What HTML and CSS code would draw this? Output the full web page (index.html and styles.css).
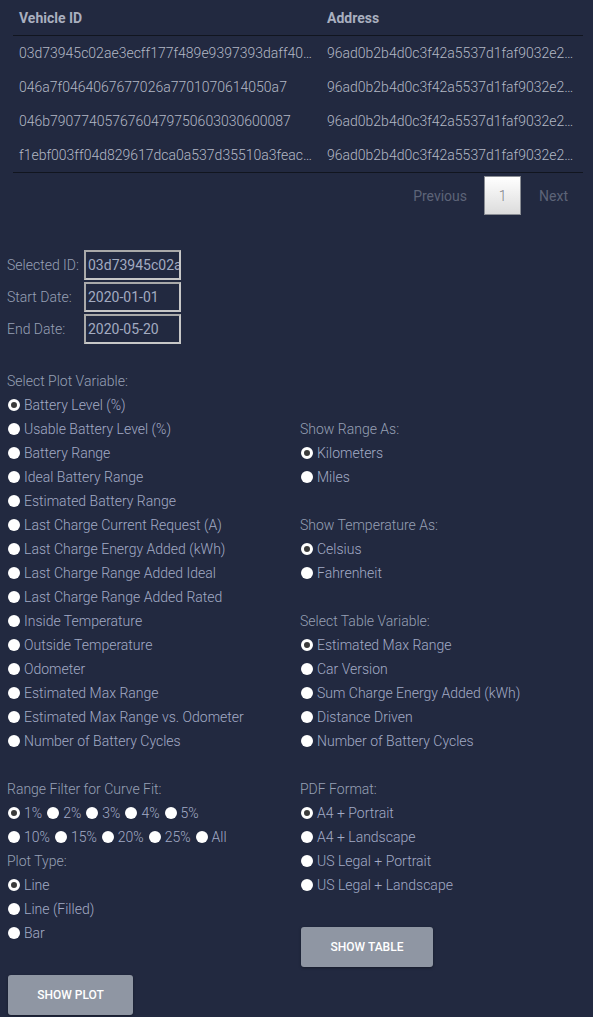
FILE: index.html
```html
<!DOCTYPE html>
<html>
<head>
<meta charset="utf-8">
<link rel="stylesheet" href="styles.css">
</head>
<body>
<div class="table-wrap">
  <table class="vtable">
    <colgroup><col class="c1"><col class="c2"></colgroup>
    <thead>
      <tr><th>Vehicle ID</th><th>Address</th></tr>
    </thead>
    <tbody>
      <tr><td>03d73945c02ae3ecff177f489e9397393daff40a1b2c3d4e5f</td><td>96ad0b2b4d0c3f42a5537d1faf9032e2a1b2c3d4</td></tr>
      <tr><td>046a7f0464067677026a7701070614050a7</td><td>96ad0b2b4d0c3f42a5537d1faf9032e2a1b2c3d4</td></tr>
      <tr><td>046b7907740576760479750603030600087</td><td>96ad0b2b4d0c3f42a5537d1faf9032e2a1b2c3d4</td></tr>
      <tr><td>f1ebf003ff04d829617dca0a537d35510a3feac9a8b7c6d5</td><td>96ad0b2b4d0c3f42a5537d1faf9032e2a1b2c3d4</td></tr>
    </tbody>
  </table>
  <div class="pager">
    <span class="pg-link">Previous</span>
    <span class="pg-num">1</span>
    <span class="pg-link">Next</span>
  </div>
</div>

<div class="fields">
  <div class="field"><span class="flabel">Selected ID:</span><span class="finput">03d73945c02ae3ecff177f489e</span></div>
  <div class="field"><span class="flabel">Start Date:</span><span class="finput">2020-01-01</span></div>
  <div class="field"><span class="flabel">End Date:</span><span class="finput">2020-05-20</span></div>
</div>

<div class="options">
  <div class="col">
    <div class="heading">Select Plot Variable:</div>
    <div class="radio"><span class="dot on"></span>Battery Level (%)</div>
    <div class="radio"><span class="dot"></span>Usable Battery Level (%)</div>
    <div class="radio"><span class="dot"></span>Battery Range</div>
    <div class="radio"><span class="dot"></span>Ideal Battery Range</div>
    <div class="radio"><span class="dot"></span>Estimated Battery Range</div>
    <div class="radio"><span class="dot"></span>Last Charge Current Request (A)</div>
    <div class="radio"><span class="dot"></span>Last Charge Energy Added (kWh)</div>
    <div class="radio"><span class="dot"></span>Last Charge Range Added Ideal</div>
    <div class="radio"><span class="dot"></span>Last Charge Range Added Rated</div>
    <div class="radio"><span class="dot"></span>Inside Temperature</div>
    <div class="radio"><span class="dot"></span>Outside Temperature</div>
    <div class="radio"><span class="dot"></span>Odometer</div>
    <div class="radio"><span class="dot"></span>Estimated Max Range</div>
    <div class="radio"><span class="dot"></span>Estimated Max Range vs. Odometer</div>
    <div class="radio"><span class="dot"></span>Number of Battery Cycles</div>
    <div class="spacer"></div>
    <div class="heading">Range Filter for Curve Fit:</div>
    <div class="inline-row">
      <span class="iradio"><span class="dot on"></span>1%</span>
      <span class="iradio"><span class="dot"></span>2%</span>
      <span class="iradio"><span class="dot"></span>3%</span>
      <span class="iradio"><span class="dot"></span>4%</span>
      <span class="iradio"><span class="dot"></span>5%</span>
    </div>
    <div class="inline-row">
      <span class="iradio"><span class="dot"></span>10%</span>
      <span class="iradio"><span class="dot"></span>15%</span>
      <span class="iradio"><span class="dot"></span>20%</span>
      <span class="iradio"><span class="dot"></span>25%</span>
      <span class="iradio"><span class="dot"></span>All</span>
    </div>
    <div class="heading">Plot Type:</div>
    <div class="radio"><span class="dot on"></span>Line</div>
    <div class="radio"><span class="dot"></span>Line (Filled)</div>
    <div class="radio"><span class="dot"></span>Bar</div>
    <button class="btn btn-plot">SHOW PLOT</button>
  </div>
  <div class="col col-right">
    <div class="heading">Show Range As:</div>
    <div class="radio"><span class="dot on"></span>Kilometers</div>
    <div class="radio"><span class="dot"></span>Miles</div>
    <div class="spacer"></div>
    <div class="heading">Show Temperature As:</div>
    <div class="radio"><span class="dot on"></span>Celsius</div>
    <div class="radio"><span class="dot"></span>Fahrenheit</div>
    <div class="spacer"></div>
    <div class="heading">Select Table Variable:</div>
    <div class="radio"><span class="dot on"></span>Estimated Max Range</div>
    <div class="radio"><span class="dot"></span>Car Version</div>
    <div class="radio"><span class="dot"></span>Sum Charge Energy Added (kWh)</div>
    <div class="radio"><span class="dot"></span>Distance Driven</div>
    <div class="radio"><span class="dot"></span>Number of Battery Cycles</div>
    <div class="spacer"></div>
    <div class="heading">PDF Format:</div>
    <div class="radio"><span class="dot on"></span>A4 + Portrait</div>
    <div class="radio"><span class="dot"></span>A4 + Landscape</div>
    <div class="radio"><span class="dot"></span>US Legal + Portrait</div>
    <div class="radio"><span class="dot"></span>US Legal + Landscape</div>
    <button class="btn btn-table">SHOW TABLE</button>
  </div>
</div>
</body>
</html>
```

FILE: styles.css
```css
html, body {
  margin: 0;
  padding: 0;
  background: #222940;
}
body {
  font-family: Roboto, "Liberation Sans", sans-serif;
  font-size: 14px;
  font-weight: 300;
  color: #a3abc0;
  height: 1017px;
  overflow: hidden;
}
.table-wrap {
  padding: 0 10px 0 13px;
}
.vtable {
  width: 570px;
  table-layout: fixed;
  border-collapse: collapse;
  border-bottom: 1px solid #11151f;
}
.vtable .c1 { width: 308px; }
.vtable .c2 { width: 262px; }
.vtable th {
  text-align: left;
  font-weight: 700;
  color: #a9afbf;
  height: 35px;
  padding: 0 6px;
  border-bottom: 1px solid #11151f;
}
.vtable td {
  height: 34px;
  padding: 0 6px;
  color: #b3b8c5;
  white-space: nowrap;
  overflow: hidden;
  text-overflow: ellipsis;
}
.pager {
  display: flex;
  justify-content: flex-end;
  align-items: center;
  height: 43px;
  padding-right: 15px;
  margin-top: 1px;
}
.pg-link {
  color: #5d6478;
  font-weight: 400;
  padding: 0 18px;
}
.pg-link:first-child { padding-right: 17px; }
.pg-link:last-child { padding-right: 0; }
.pg-num {
  width: 35px;
  height: 37px;
  border: 1px solid #8a8d94;
  background: linear-gradient(#ffffff, #dcdcdc);
  color: #7d8088;
  display: flex;
  align-items: center;
  justify-content: center;
}
.fields {
  padding: 32px 0 0 7px;
}
.field {
  display: flex;
  align-items: center;
  height: 32px;
}
.flabel {
  width: 77px;
  color: #97a0b5;
}
.finput {
  width: 91px;
  height: 26px;
  border: 2px solid #c7c7c7;
  border-top-color: #a9a9a9;
  border-left-color: #a9a9a9;
  padding-left: 2px;
  line-height: 26px;
  overflow: hidden;
  white-space: nowrap;
  color: #a3abc0;
  font-weight: 400;
}
.options {
  display: grid;
  grid-template-columns: 293px 1fr;
  padding: 24px 0 0 7px;
}
.heading {
  height: 24px;
  line-height: 24px;
  color: #97a0b5;
}
.radio {
  height: 24px;
  display: flex;
  align-items: center;
  color: #a3abc6;
}
.spacer { height: 24px; }
.dot {
  width: 12px;
  height: 12px;
  border-radius: 50%;
  background: #fff;
  box-sizing: border-box;
  margin: 0 4px 1px 1px;
  flex: none;
  display: inline-block;
}
.dot.on {
  border: 3px solid #fff;
  background: #3b3b3b;
}
.inline-row {
  height: 24px;
  display: flex;
  align-items: center;
  color: #a3abc6;
}
.iradio {
  display: flex;
  align-items: center;
  margin-right: 4px;
}
.col-right {
  padding-top: 48px;
}
.btn {
  display: block;
  margin-top: 30px;
  height: 40px;
  background: #8f96a3;
  color: #ffffff;
  border: none;
  border-radius: 3px;
  font-family: Roboto, "Liberation Sans", sans-serif;
  font-size: 12px;
  font-weight: 500;
  box-shadow: 0 1px 3px rgba(0,0,0,0.35);
}
.btn-plot { width: 125px; margin-left: 1px; }
.btn-table { width: 132px; margin-left: 1px; }
```
